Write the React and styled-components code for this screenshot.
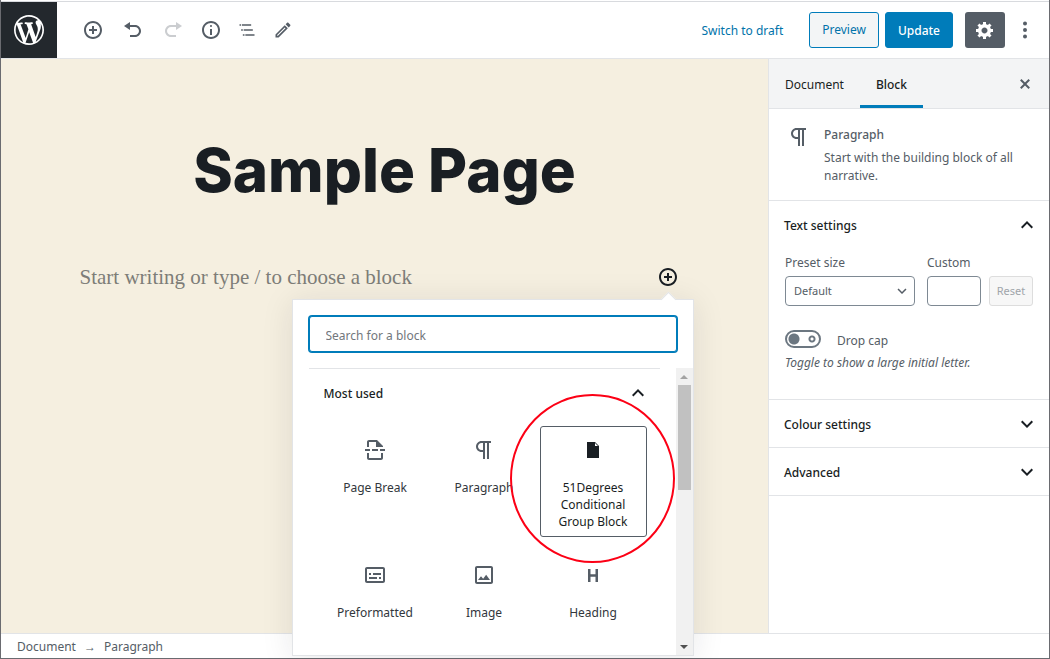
import React from "react";
import styled, { createGlobalStyle, css } from "styled-components";

const font = '"Noto Sans", "Open Sans", sans-serif';
const ink = "#191e23";
const slate = "#555d66";
const line = "#e2e4e7";
const blue = "#007cba";

const GlobalStyle = createGlobalStyle`
  *, *::before, *::after { box-sizing: border-box; }
  body { margin: 0; background: #fff; color: ${ink}; font: 12px/18px ${font}; }
  button, input, select { font: inherit; color: inherit; }
  button { cursor: pointer; }
  h1, h2, p, ul { margin: 0; padding: 0; font-size: inherit; }
  svg { display: block; fill: currentColor; flex: none; }
`;

const PATHS = {
  wordpress: "M20 10c0-5.51-4.49-10-10-10C4.48 0 0 4.49 0 10c0 5.52 4.48 10 10 10 5.51 0 10-4.48 10-10zM7.78 15.37L4.37 6.22c.55-.02 1.17-.08 1.17-.08.5-.06.44-1.13-.06-1.11 0 0-1.45.11-2.37.11-.18 0-.37 0-.58-.01C4.12 2.69 6.87 1.11 10 1.11c2.33 0 4.45.87 6.05 2.34-.68-.11-1.65.39-1.65 1.58 0 .74.45 1.36.9 2.1.35.61.55 1.36.55 2.46 0 1.49-1.4 5-1.4 5l-3.03-8.37c.54-.02.82-.17.82-.17.5-.05.44-1.25-.06-1.22 0 0-1.44.12-2.38.12-.87 0-2.33-.12-2.33-.12-.5-.03-.56 1.2-.06 1.22l.92.08 1.26 3.41zM17.41 10c.24-.64.74-1.87.43-4.25.7 1.29 1.05 2.71 1.05 4.25 0 3.29-1.73 6.24-4.4 7.78.97-2.59 1.94-5.2 2.92-7.78zM6.1 18.09C3.12 16.65 1.11 13.53 1.11 10c0-1.3.23-2.48.72-3.59C3.25 10.3 4.67 14.2 6.1 18.09zm4.03-6.63l2.58 6.98c-.86.29-1.76.45-2.71.45-.79 0-1.57-.11-2.29-.33.81-2.38 1.62-4.74 2.42-7.1z",
  insert: "M10 1c-5 0-9 4-9 9s4 9 9 9 9-4 9-9-4-9-9-9zm0 16c-3.9 0-7-3.1-7-7s3.1-7 7-7 7 3.1 7 7-3.1 7-7 7zm1-11H9v3H6v2h3v3h2v-3h3V9h-3V6z",
  undo: "M12 5H7V2L1 6l6 4V7h5c2.2 0 4 1.8 4 4s-1.8 4-4 4H7v2h5c3.3 0 6-2.7 6-6s-2.7-6-6-6z",
  redo: "M8 5h5V2l6 4-6 4V7H8c-2.2 0-4 1.8-4 4s1.8 4 4 4h5v2H8c-3.3 0-6-2.7-6-6s2.7-6 6-6z",
  info: "M9 15h2V9H9v6zm1-10c-.5 0-1 .5-1 1s.5 1 1 1 1-.5 1-1-.5-1-1-1zm0-4c-5 0-9 4-9 9s4 9 9 9 9-4 9-9-4-9-9-9zm0 16c-3.9 0-7-3.1-7-7s3.1-7 7-7 7 3.1 7 7-3.1 7-7 7z",
  navigation: "M5 5H3v2h2V5zm3 8h11v-2H8v2zm9-8H6v2h11V5zM7 11H5v2h2v-2zm0 8h2v-2H7v2zm3-2v2h11v-2H10z",
  pencil: "M14.06 9.02l.92.92L5.92 19H5v-.92l9.06-9.06M17.66 3c-.25 0-.51.1-.7.29l-1.83 1.83 3.75 3.75 1.83-1.83c.39-.39.39-1.02 0-1.41l-2.34-2.34c-.2-.2-.45-.29-.71-.29zm-3.6 3.19L3 17.25V21h3.75L17.81 9.94l-3.75-3.75z",
  gear: "M18 12h-2.18c-.17.7-.44 1.35-.81 1.93l1.54 1.54-2.1 2.1-1.54-1.54c-.58.36-1.23.63-1.91.79V19H8v-2.18c-.68-.16-1.33-.43-1.91-.79l-1.54 1.54-2.12-2.12 1.54-1.54c-.36-.58-.63-1.23-.79-1.91H1V9.03h2.17c.16-.7.44-1.35.8-1.94L2.43 5.55l2.1-2.1 1.54 1.54c.58-.37 1.24-.64 1.93-.81V2h3v2.18c.68.16 1.33.43 1.91.79l1.54-1.54 2.12 2.12-1.54 1.54c.36.59.64 1.24.8 1.94H18V12zm-8.5 1.5c1.66 0 3-1.34 3-3s-1.34-3-3-3-3 1.34-3 3 1.34 3 3 3z",
  more: "M10 1.5a2 2 0 1 0 0 4 2 2 0 0 0 0-4zM10 8a2 2 0 1 0 0 4 2 2 0 0 0 0-4zM10 14.5a2 2 0 1 0 0 4 2 2 0 0 0 0-4z",
  close: "M14.95 6.46L11.41 10l3.54 3.54-1.41 1.41L10 11.42l-3.53 3.53-1.42-1.42L8.58 10 5.05 6.47l1.42-1.42L10 8.58l3.54-3.53z",
  paragraph: "M11 5v7H9.5C7.6 12 6 10.4 6 8.5S7.6 5 9.5 5H11m8-2H9.5C6.5 3 4 5.5 4 8.5S6.5 14 9.5 14H11v7h2V5h2v16h2V5h2V3z",
  up: "M12 8l-6 6 1.41 1.41L12 10.83l4.59 4.58L18 14z",
  down: "M7.41 8.59L12 13.17l4.59-4.58L18 10l-6 6-6-6z",
  pageBreak: "M9 11h6v2H9zM2 11h5v2H2zM17 11h5v2h-5zM4 9V4c0-1.1.9-2 2-2h8l6 6v1h-7V4H6v5zM4 15v5c0 1.1.9 2 2 2h12c1.1 0 2-.9 2-2v-5h-2v5H6v-5z",
  page: "M12 2l4 4v12H4V2h8zm0 4h3l-3-3v3z",
  preformatted: "M20 4H4c-1.1 0-2 .9-2 2v12c0 1.1.9 2 2 2h16c1.1 0 2-.9 2-2V6c0-1.1-.9-2-2-2zm0 14H4V6h16v12zM6 10h2v2H6zM6 14h8v2H6zM16 14h2v2h-2zM10 10h8v2h-8z",
  image: "M19 3H5c-1.1 0-2 .9-2 2v14c0 1.1.9 2 2 2h14c1.1 0 2-.9 2-2V5c0-1.1-.9-2-2-2zm0 16H5V5h14v14zM14.14 11.86l-3 3.87L9 13.14 6 17h12l-3.86-5.14z",
  heading: "M12.5 4v5.2h-5V4H5v13h2.5v-5.2h5V17H15V4",
};

function Icon({ name, size = 20, box = 20 }) {
  return (
    <svg width={size} height={size} viewBox={`0 0 ${box} ${box}`} aria-hidden="true">
      <path d={PATHS[name]} fillRule={name === "wordpress" ? "nonzero" : "evenodd"} />
    </svg>
  );
}

const Shell = styled.div`
  display: flex;
  flex-direction: column;
  min-height: 100vh;
  padding-top: 1px;
  border: solid #6a6b70;
  border-width: 0 1px 1px;
`;

const Header = styled.header`
  display: flex;
  align-items: center;
  height: 58px;
  border-top: 1px solid #d8dade;
  border-bottom: 1px solid ${line};
`;

const HomeLink = styled.a`
  display: grid;
  place-items: center;
  width: 56px;
  height: 56px;
  background: #23282d;
  color: #fff;
`;

const Tools = styled.div`
  display: flex;
  gap: ${(p) => p.$gap || 0}px;
  padding-left: ${(p) => p.$lead}px;
`;

const IconButton = styled.button`
  display: grid;
  place-items: center;
  width: ${(p) => p.$width || 36}px;
  height: 36px;
  padding: 0;
  border: 0;
  border-radius: 3px;
  background: ${(p) => (p.$pressed ? slate : "transparent")};
  color: ${(p) => (p.$pressed ? "#fff" : p.$dark ? ink : slate)};
  &:disabled { opacity: 0.3; }
`;

const Actions = styled.div`
  display: flex;
  align-items: center;
  margin-left: auto;
  padding-right: 4px;
`;

const TextButton = styled.button`
  padding: 2px 0 0;
  margin-right: 26px;
  border: 0;
  background: none;
  color: #0073aa;
`;

const Button = styled.button`
  height: 36px;
  padding: ${(p) => (p.$primary ? 2 : 0)}px 12px 0;
  border: 1px solid ${blue};
  border-radius: 3px;
  background: ${(p) => (p.$primary ? blue : "#f3f5f6")};
  color: ${(p) => (p.$primary ? "#fff" : "#0073aa")};
  font-weight: ${(p) => (p.$primary ? 500 : 400)};
  margin-right: ${(p) => (p.$primary ? 12 : 6)}px;
`;

const Body = styled.div`
  display: flex;
  flex: 1;
`;

const Canvas = styled.main`
  flex: 1;
  min-width: 0;
  padding: 75px 16px 0;
  background: #f5efe0;
`;

const Title = styled.h1`
  text-align: center;
  font: 800 60px/72px Inter, sans-serif;
`;

const BlockRow = styled.div`
  display: flex;
  align-items: center;
  justify-content: space-between;
  max-width: 610px;
  margin: 53px auto 0;
  padding-right: 4px;
`;

const Placeholder = styled.p`
  color: #7d7d78;
  font: 21px/36px "Liberation Serif", serif;
`;

const Anchor = styled.div`
  position: relative;
`;

const Popover = styled.div`
  position: absolute;
  top: 40px;
  right: -8px;
  width: 402px;
  border: 1px solid ${line};
  background: #fff;
  box-shadow: 0 3px 30px rgba(25, 30, 35, 0.1);
  &::before {
    content: "";
    position: absolute;
    top: -6px;
    right: 19px;
    width: 11px;
    height: 11px;
    border: solid ${line};
    border-width: 1px 0 0 1px;
    background: #fff;
    transform: rotate(45deg);
  }
`;

const Search = styled.input`
  display: block;
  position: relative;
  width: 368px;
  height: 36px;
  margin: 16px;
  padding: 2px 16px 0;
  border: 1px solid ${blue};
  border-radius: 3px;
  outline: 0;
  box-shadow: 0 0 0 1px ${blue};
  &::placeholder { color: #72777c; opacity: 1; }
`;

const Results = styled.div`
  display: flex;
  height: 287px;
`;

const Group = styled.section`
  flex: 1;
  margin: 0 16px;
  border-top: 1px solid ${line};
`;

const PanelToggle = styled.button`
  display: flex;
  align-items: center;
  justify-content: space-between;
  width: 100%;
  height: ${(p) => p.$height || 47}px;
  padding: 0 10px 0 15px;
  border: 0;
  background: none;
  font-weight: 500;
`;

const PanelTitle = styled.span`
  padding-top: 2px;
`;

const Tiles = styled.ul`
  display: grid;
  grid-template-columns: repeat(3, 1fr);
  gap: 14px 2px;
  padding: 9px 13px 0;
  list-style: none;
`;

const TileItem = styled.li`
  position: relative;
`;

const Tile = styled.button`
  display: flex;
  flex-direction: column;
  align-items: center;
  gap: 17px;
  width: 100%;
  height: ${(p) => (p.$short ? 90 : 111)}px;
  padding: 11px 8px 0;
  border: 1px solid ${(p) => (p.$active ? slate : "transparent")};
  border-radius: 3px;
  background: none;
  color: ${(p) => (p.$active ? ink : "#32373c")};
  line-height: 17px;
`;

const TileIcon = styled.span`
  display: grid;
  place-items: center;
  width: 24px;
  height: 24px;
  color: ${(p) => (p.$active ? ink : slate)};
`;

const Highlight = styled.span`
  position: absolute;
  top: -32px;
  left: -30px;
  width: 165px;
  height: 169px;
  border: 2px solid #fc0015;
  border-radius: 50%;
  pointer-events: none;
`;

const Scrollbar = styled.div`
  display: flex;
  flex-direction: column;
  align-items: center;
  justify-content: space-between;
  width: 17px;
  background: #f1f1f1;
`;

const Thumb = styled.div`
  width: 13px;
  height: 105px;
  margin-bottom: auto;
  background: #c1c1c1;
`;

const Arrow = styled.span`
  display: grid;
  place-items: center;
  height: 17px;
  &::before {
    content: "";
    border: 4px solid transparent;
    ${(p) =>
      p.$up
        ? css`border-top: 0; border-bottom-color: #a3a3a3;`
        : css`border-bottom: 0; border-top-color: #505050;`}
  }
`;

const Footer = styled.footer`
  display: flex;
  align-items: center;
  gap: 8px;
  height: 25px;
  padding: 2px 0 0 16px;
  border-top: 1px solid ${line};
  color: ${slate};
`;

const Sidebar = styled.aside`
  width: 281px;
  border-left: 1px solid ${line};
  background: #fff;
  color: ${slate};
`;

const Tabs = styled.div`
  display: flex;
  align-items: center;
  height: 50px;
  border-bottom: 1px solid ${line};
  background: #f3f4f5;
`;

const Tab = styled.button`
  height: 49px;
  padding: 5px 16px 0;
  border: 0;
  border-bottom: 3px solid ${(p) => (p.$active ? blue : "transparent")};
  background: none;
  color: ${ink};
  font-weight: ${(p) => (p.$active ? 500 : 400)};
`;

const CloseSlot = styled.div`
  margin-left: auto;
  padding-right: 6px;
`;

const Card = styled.div`
  display: flex;
  gap: 13px;
  padding: 16px 16px 15px 18px;
  border-bottom: 1px solid ${line};
`;

const CardText = styled.div`
  padding-top: 1px;
`;

const CardName = styled.h2`
  margin-bottom: 5px;
  font-weight: 500;
`;

const Panel = styled.section`
  border-bottom: 1px solid ${line};
  ${PanelToggle} { color: ${ink}; }
`;

const PanelBody = styled.div`
  padding: 5px 16px 27px;
`;

const Fields = styled.div`
  display: flex;
  align-items: flex-end;
`;

const Field = styled.label`
  display: flex;
  flex-direction: column;
  gap: 4px;
  width: ${(p) => p.$width}px;
  margin-right: ${(p) => p.$after}px;
`;

const SelectWrap = styled.span`
  display: grid;
  align-items: center;
  > * { grid-area: 1 / 1; }
  svg { justify-self: end; margin-right: 4px; pointer-events: none; }
`;

const Select = styled.select`
  appearance: none;
  width: 100%;
  height: 30px;
  padding: 0 8px;
  border: 1px solid #7e8993;
  border-radius: 4px;
  background: #fff;
  font-size: 11px;
`;

const NumberInput = styled.input`
  width: 100%;
  height: 30px;
  border: 1px solid #7e8993;
  border-radius: 4px;
`;

const Reset = styled.button`
  width: 44px;
  height: 30px;
  padding: 0;
  border: 1px solid #ddd;
  border-radius: 3px;
  background: #f7f7f7;
  color: #a0a5aa;
  font-size: 11px;
`;

const SwitchRow = styled.label`
  display: flex;
  align-items: flex-start;
  gap: 16px;
  margin-top: 24px;
`;

const SwitchText = styled.span`
  padding-top: 2px;
`;

const Switch = styled.input`
  appearance: none;
  width: 36px;
  height: 18px;
  margin: 0;
  border: 2px solid #6c7781;
  border-radius: 9px;
  background:
    radial-gradient(circle at 7px 7px, #6c7781 5px, transparent 6px),
    radial-gradient(circle at 25px 7px, transparent 1px, #6c7781 2px, #6c7781 3px, transparent 4px);
`;

const Help = styled.p`
  margin-top: 4px;
  font-style: italic;
`;

const TILES = [
  { label: "Page Break", icon: "pageBreak", box: 24 },
  { label: "Paragraph", icon: "paragraph", box: 24 },
  { label: "51Degrees Conditional Group Block", icon: "page", box: 20, active: true },
  { label: "Preformatted", icon: "preformatted", box: 24 },
  { label: "Image", icon: "image", box: 24 },
  { label: "Heading", icon: "heading", box: 20 },
];

function BlockTile({ label, icon, box, active, short }) {
  return (
    <TileItem>
      <Tile type="button" $active={active} $short={short}>
        <TileIcon $active={active}><Icon name={icon} size={box} box={box} /></TileIcon>
        <span>{label}</span>
      </Tile>
      {active && <Highlight />}
    </TileItem>
  );
}

function Inserter() {
  return (
    <Popover role="dialog" aria-label="Add block">
      <Search type="search" placeholder="Search for a block" aria-label="Search for a block" />
      <Results>
        <Group>
          <PanelToggle type="button" $height={48} aria-expanded="true">
            <PanelTitle>Most used</PanelTitle>
            <Icon name="up" size={24} box={24} />
          </PanelToggle>
          <Tiles>
            {TILES.map((tile, i) => <BlockTile key={tile.label} {...tile} short={i > 2} />)}
          </Tiles>
        </Group>
        <Scrollbar aria-hidden="true">
          <Arrow $up />
          <Thumb />
          <Arrow />
        </Scrollbar>
      </Results>
    </Popover>
  );
}

function CollapsedPanel({ title }) {
  return (
    <Panel>
      <PanelToggle type="button" aria-expanded="false">
        <PanelTitle>{title}</PanelTitle>
        <Icon name="down" size={24} box={24} />
      </PanelToggle>
    </Panel>
  );
}

export default function App() {
  return (
    <Shell>
      <GlobalStyle />
      <Header>
        <HomeLink href="#" aria-label="View Pages"><Icon name="wordpress" size={30} /></HomeLink>
        <Tools $gap={4} $lead={18}>
          <IconButton type="button" aria-label="Add block"><Icon name="insert" /></IconButton>
          <IconButton type="button" aria-label="Undo"><Icon name="undo" /></IconButton>
          <IconButton type="button" aria-label="Redo" disabled><Icon name="redo" /></IconButton>
        </Tools>
        <Tools $lead={2}>
          <IconButton type="button" aria-label="Content structure"><Icon name="info" /></IconButton>
          <IconButton type="button" aria-label="Block navigation"><Icon name="navigation" box={24} /></IconButton>
          <IconButton type="button" aria-label="Tools"><Icon name="pencil" box={24} /></IconButton>
        </Tools>
        <Actions>
          <TextButton type="button">Switch to draft</TextButton>
          <Button type="button">Preview</Button>
          <Button type="button" $primary>Update</Button>
          <IconButton type="button" aria-label="Settings" $width={40} $pressed><Icon name="gear" /></IconButton>
          <IconButton type="button" aria-label="More tools" $width={40}><Icon name="more" /></IconButton>
        </Actions>
      </Header>
      <Body>
        <Canvas>
          <Title>Sample Page</Title>
          <BlockRow>
            <Placeholder>Start writing or type / to choose a block</Placeholder>
            <Anchor>
              <IconButton type="button" aria-label="Add block" $dark><Icon name="insert" /></IconButton>
              <Inserter />
            </Anchor>
          </BlockRow>
        </Canvas>
        <Sidebar>
          <Tabs>
            <Tab type="button">Document</Tab>
            <Tab type="button" $active>Block</Tab>
            <CloseSlot>
              <IconButton type="button" aria-label="Close settings"><Icon name="close" /></IconButton>
            </CloseSlot>
          </Tabs>
          <Card>
            <Icon name="paragraph" size={24} box={24} />
            <CardText>
              <CardName>Paragraph</CardName>
              <p>Start with the building block of all narrative.</p>
            </CardText>
          </Card>
          <Panel>
            <PanelToggle type="button" $height={48} aria-expanded="true">
              <PanelTitle>Text settings</PanelTitle>
              <Icon name="up" size={24} box={24} />
            </PanelToggle>
            <PanelBody>
              <Fields>
                <Field $width={130} $after={12}>
                  Preset size
                  <SelectWrap>
                    <Select defaultValue="Default"><option>Default</option></Select>
                    <Icon name="down" size={18} box={24} />
                  </SelectWrap>
                </Field>
                <Field $width={54} $after={8}>
                  Custom
                  <NumberInput type="text" inputMode="numeric" />
                </Field>
                <Reset type="button" disabled>Reset</Reset>
              </Fields>
              <SwitchRow>
                <Switch type="checkbox" role="switch" />
                <SwitchText>Drop cap</SwitchText>
              </SwitchRow>
              <Help>Toggle to show a large initial letter.</Help>
            </PanelBody>
          </Panel>
          <CollapsedPanel title="Colour settings" />
          <CollapsedPanel title="Advanced" />
        </Sidebar>
      </Body>
      <Footer>
        <span>Document</span>
        <span>→</span>
        <span>Paragraph</span>
      </Footer>
    </Shell>
  );
}
